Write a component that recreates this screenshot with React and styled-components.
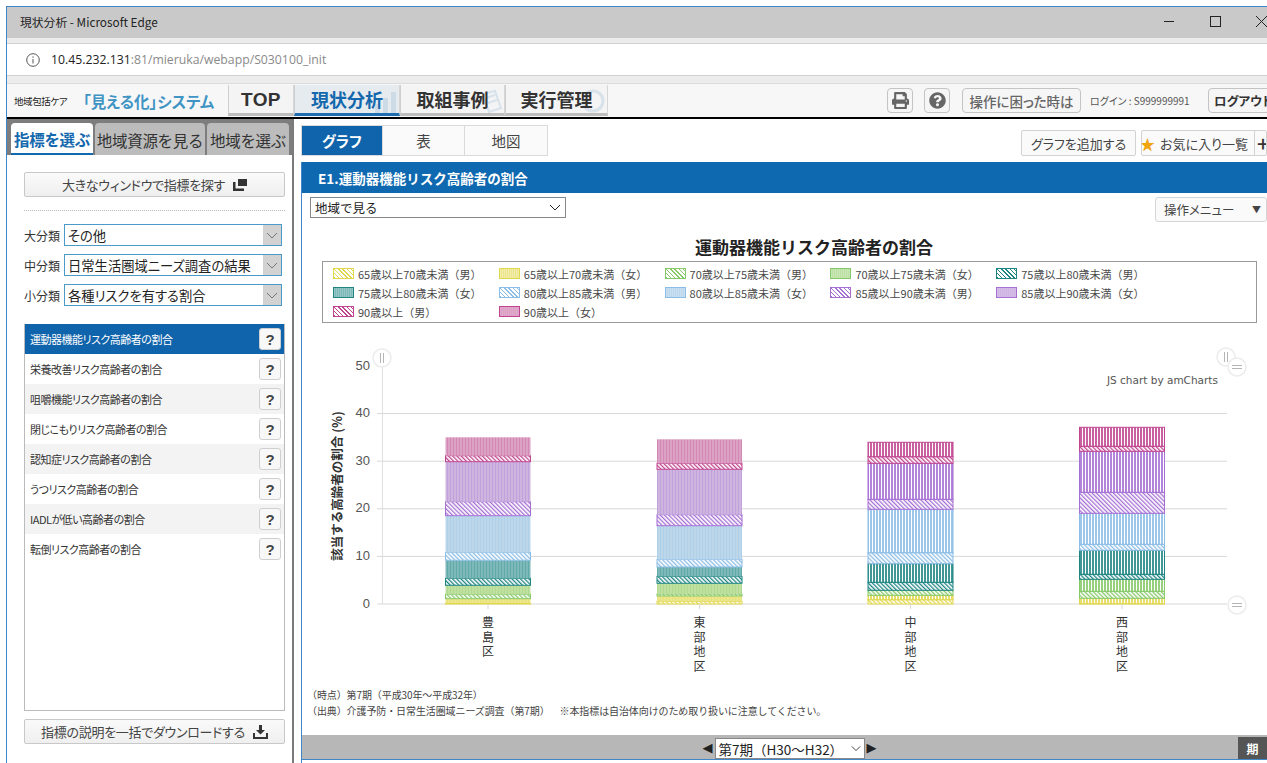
import React from 'react';
import styled, { createGlobalStyle } from 'styled-components';
import { FaPrint, FaQuestionCircle } from 'react-icons/fa';

const GlobalStyle = createGlobalStyle`
  html, body {
    margin: 0;
    padding: 0;
    background: #fff;
    overflow: hidden;
  }
  * { box-sizing: border-box; }
  body {
    font-family: "Noto Sans CJK JP", "Liberation Sans", sans-serif;
    color: #333;
  }
`;

const Page = styled.div`
  width: 1267px;
  height: 763px;
  padding: 6px 0 0 6px;
  overflow: hidden;
`;

const Browser = styled.div`
  width: 1261px;
  height: 757px;
  border-top: 1px solid #3f87c8;
  border-left: 1px solid #3f87c8;
  display: flex;
  flex-direction: column;
  overflow: hidden;
  background: #fff;
`;

const TitleBar = styled.div`
  height: 31px;
  flex: none;
  background: #c9c9c9;
  display: flex;
  align-items: center;
  padding: 0 0 3px 13px;
  font-size: 11.8px;
  color: #222;
`;

const TitleText = styled.span`
  flex: 1;
`;

const WinButton = styled.span`
  width: 46px;
  display: flex;
  justify-content: center;
  align-items: center;
  margin-right: ${p => p.$gap || 0}px;
`;

const AddressWrap = styled.div`
  height: 45px;
  flex: none;
  background: #ececec;
  padding: 5px 0 6px;
`;

const AddressBar = styled.div`
  height: 33px;
  background: #fff;
  border-top: 1px solid #d0d0d0;
  border-bottom: 1px solid #d0d0d0;
  display: flex;
  align-items: center;
  padding-left: 19px;
  gap: 11px;
  font-family: "Open Sans", "Noto Sans CJK JP", sans-serif;
  font-size: 12.25px;
  color: #222;
`;

const UrlRest = styled.span`
  color: #8a8a8a;
`;

const AppHeader = styled.header`
  height: 36px;
  flex: none;
  border-bottom: 2px solid #000;
  border-top: 1px solid #dcdcdc;
  background: #f7f7f7;
  display: flex;
  align-items: center;
  padding-left: 7px;
`;

const OrgName = styled.span`
  width: 69px;
  font-size: 9.5px;
  letter-spacing: -0.4px;
  font-feature-settings: "palt";
  color: #222;
`;

const LogoText = styled.span`
  width: 145px;
  font-size: 15.5px;
  font-weight: 700;
  white-space: nowrap;
  font-feature-settings: "palt";
  color: #3f94c4;
`;

const NavTabs = styled.nav`
  display: flex;
  height: 31px;
  align-self: flex-end;
  margin-bottom: 1px;
`;

const NavTab = styled.div`
  position: relative;
  width: ${p => p.$width}px;
  display: flex;
  align-items: center;
  justify-content: center;
  border-left: 1px solid #cfcfcf;
  border-right: 1px solid #d6d6d6;
  border-bottom: 3px solid ${p => (p.$active ? '#1e6db0' : '#bdbdbd')};
  background: ${p => (p.$active ? '#e6ebef' : '#f4f4f4')};
  color: ${p => (p.$active ? '#1468ad' : '#333')};
  font-weight: 700;
  line-height: 1;
  overflow: hidden;
`;

const NavLabel = styled.span`
  position: relative;
  letter-spacing: ${p => (p.$latin ? '0.4px' : '0')};
  font-family: ${p => (p.$latin ? '"Liberation Sans", sans-serif' : 'inherit')};
  font-size: ${p => (p.$latin ? '19px' : '18px')};
`;

const NavMark = styled.svg`
  position: absolute;
  right: 1px;
  top: 3px;
  width: 26px;
  height: 26px;
  opacity: 0.28;
`;

const HeaderTools = styled.div`
  margin-left: auto;
  display: flex;
  align-items: center;
  width: 381px;
  flex: none;
  transform: translateX(1px);
`;

const ToolButton = styled.div`
  height: 25px;
  width: ${p => p.$width}px;
  margin-right: ${p => p.$gap}px;
  flex: none;
  border: 1px solid #c4c4c4;
  border-radius: 4px;
  background: #f6f6f6;
  display: flex;
  align-items: center;
  justify-content: ${p => (p.$start ? 'flex-start' : 'center')};
  padding-left: ${p => (p.$start ? 5 : 0)}px;
  color: ${p => p.$color || '#666'};
  font-size: ${p => p.$size || 13.5}px;
  font-weight: ${p => p.$weight || 500};
  font-feature-settings: "palt";
  white-space: nowrap;
  overflow: hidden;
`;

const LoginId = styled.span`
  width: 118px;
  flex: none;
  font-size: 10px;
  font-feature-settings: "palt";
  color: #555;
  white-space: nowrap;
`;

const Content = styled.div`
  flex: 1;
  display: flex;
  min-height: 0;
`;

const SidePanel = styled.aside`
  width: 287px;
  flex: none;
  border-right: 2px solid #7a7a7a;
  display: flex;
  flex-direction: column;
`;

const SideTabs = styled.div`
  height: 36px;
  flex: none;
  background: #7d7d7d;
  display: flex;
  align-items: flex-end;
  gap: 2px;
  padding-left: 4px;
`;

const SideTab = styled.div`
  width: ${p => p.$width}px;
  height: 32px;
  flex: none;
  border-radius: 4px 4px 0 0;
  display: flex;
  align-items: center;
  justify-content: center;
  padding-top: 3px;
  font-size: 15.5px;
  line-height: 1;
  white-space: nowrap;
  letter-spacing: -0.3px;
  background: ${p => (p.$active ? '#fff' : '#bcbcbc')};
  color: ${p => (p.$active ? '#1468ad' : '#333')};
  font-weight: ${p => (p.$active ? 700 : 400)};
  border-bottom: ${p => (p.$active ? '2px solid #1468ad' : 'none')};
`;

const SideBody = styled.div`
  flex: 1;
  min-height: 0;
  padding: 17px 7px 0 17px;
  display: flex;
  flex-direction: column;
`;

const WideButton = styled.div`
  height: 25px;
  flex: none;
  border: 1px solid #c8c8c8;
  border-radius: 2px;
  background: linear-gradient(#fafafa, #efefef);
  display: flex;
  align-items: center;
  justify-content: center;
  gap: 8px;
  font-size: 13px;
  letter-spacing: -0.3px;
  font-feature-settings: "palt";
  color: #444;
`;

const DottedRule = styled.hr`
  width: 100%;
  margin: 13px 0 13px;
  border: 0;
  border-top: 1px dotted #bbb;
`;

const FilterRow = styled.div`
  display: flex;
  align-items: center;
  height: 22px;
  margin-bottom: 8px;
  padding-right: 3px;
`;

const FilterLabel = styled.span`
  width: 40px;
  flex: none;
  font-size: 12px;
  color: #333;
`;

const SelectBox = styled.div`
  flex: 1;
  height: 100%;
  border: 1px solid #4a9bca;
  display: flex;
  align-items: center;
  justify-content: space-between;
  padding-left: 3px;
  font-size: 13.3px;
  font-feature-settings: "palt";
  color: #222;
  white-space: nowrap;
`;

const SelectArrow = styled.span`
  width: 18px;
  height: 100%;
  background: #d2d2d2;
  display: flex;
  align-items: center;
  justify-content: center;
  color: #777;
  flex: none;
`;

const IndicatorList = styled.div`
  flex: none;
  height: 387px;
  margin-top: 10px;
  border: 1px solid #bbb;
  border-top: 0;
`;

const IndicatorRow = styled.div`
  height: 30px;
  display: flex;
  align-items: center;
  justify-content: space-between;
  padding: 0 3px 0 5px;
  font-size: 11px;
  letter-spacing: -0.5px;
  font-feature-settings: "palt";
  background: ${p => (p.$selected ? '#0f64ab' : p.$shaded ? '#f3f3f3' : '#fff')};
  color: ${p => (p.$selected ? '#fff' : '#333')};
`;

const HelpButton = styled.span`
  width: 22px;
  height: 22px;
  border: 1px solid #cfcfcf;
  border-radius: 3px;
  background: #f8f8f8;
  display: flex;
  align-items: center;
  justify-content: center;
  font-family: "Liberation Sans", sans-serif;
  font-weight: 700;
  font-size: 15px;
  letter-spacing: 0;
  color: #444;
`;

const DownloadButton = styled(WideButton)`
  margin-top: 8px;
`;

const Main = styled.main`
  flex: 1;
  min-width: 0;
  padding: 6px 0 0 7px;
  display: flex;
  flex-direction: column;
`;

const MainTop = styled.div`
  height: 31px;
  flex: none;
  display: flex;
  align-items: flex-end;
`;

const ViewTab = styled.div`
  width: ${p => p.$width}px;
  height: 31px;
  flex: none;
  display: flex;
  align-items: center;
  justify-content: center;
  border: 1px solid #dadada;
  border-left-width: ${p => (p.$active ? 1 : 0)}px;
  font-size: 14.5px;
  font-feature-settings: "palt";
  background: ${p => (p.$active ? '#0f64ab' : '#fafafa')};
  color: ${p => (p.$active ? '#fff' : '#444')};
  font-weight: ${p => (p.$active ? 700 : 400)};
`;

const TopActions = styled.div`
  margin-left: auto;
  display: flex;
  gap: 5px;
  width: 246px;
  flex: none;
`;

const ActionButton = styled.div`
  height: 26px;
  flex: none;
  width: ${p => p.$width}px;
  border: 1px solid #d2d2d2;
  border-radius: 2px;
  background: #fafafa;
  display: flex;
  align-items: center;
  justify-content: center;
  gap: 5px;
  font-size: 13px;
  font-feature-settings: "palt";
  color: #444;
  white-space: nowrap;
  overflow: hidden;
`;

const Star = styled.span`
  color: #f0a40e;
  font-size: 15px;
`;

const PlusCell = styled.span`
  width: 14px;
  margin-left: 1px;
  border-left: 1px solid #d2d2d2;
  height: 100%;
  display: flex;
  align-items: center;
  padding-left: 2px;
  font-size: 21px;
  font-weight: 500;
  color: #333;
`;

const ChartPanel = styled.section`
  flex: 1;
  min-height: 0;
  margin-top: 6px;
  display: flex;
  flex-direction: column;
  border-left: 1px solid #3f87c8;
`;

const PanelHeading = styled.h2`
  margin: 0;
  height: 31px;
  flex: none;
  background: #0f69b0;
  color: #fff;
  font-size: 13.5px;
  font-weight: 700;
  display: flex;
  align-items: center;
  padding-left: 16px;
`;

const ChartControls = styled.div`
  display: flex;
  justify-content: space-between;
  height: 26px;
  flex: none;
  padding: 4px 0 0 8px;
`;

const AreaSelect = styled.div`
  width: 256px;
  height: 21px;
  border: 1px solid #888;
  display: flex;
  align-items: center;
  justify-content: space-between;
  padding: 0 4px;
  font-size: 12.5px;
  color: #222;
`;

const MenuButton = styled.div`
  width: 112px;
  height: 25px;
  border: 1px solid #d5d5d5;
  border-radius: 3px;
  background: #fafafa;
  display: flex;
  align-items: center;
  justify-content: space-between;
  padding: 0 5px 0 8px;
  font-size: 12.5px;
  font-feature-settings: "palt";
  color: #444;
`;

const MenuCaret = styled.span`
  font-size: 9px;
`;

const ChartTitle = styled.h3`
  margin: 16px 0 0;
  height: 24px;
  flex: none;
  width: 1024px;
  text-align: center;
  font-size: 17px;
  line-height: 24px;
  font-weight: 700;
  color: #222;
`;

const Legend = styled.div`
  flex: none;
  width: 935px;
  height: 62px;
  margin: 2px 0 0 20px;
  border: 1px solid #999;
  padding: 2px 0 0 10px;
  display: grid;
  grid-template-columns: repeat(5, 165.8px);
  grid-auto-rows: 19px;
`;

const LegendItem = styled.div`
  display: flex;
  align-items: center;
  gap: 4px;
  font-size: 11px;
  color: #4a4a4a;
  white-space: nowrap;
`;

const Swatch = styled.span`
  width: 21px;
  height: 11px;
  flex: none;
  border: 1px solid ${p => p.$color};
  background: ${p =>
    p.$female
      ? `repeating-linear-gradient(90deg, ${p.$color}77 0 1px, ${p.$soft} 1px 2px)`
      : `repeating-linear-gradient(45deg, ${p.$color} 0 1px, #fff 1px 3px)`};
`;

const ChartSvg = styled.svg`
  display: block;
  flex: none;
  width: 965px;
  height: 350px;
  margin-top: 7px;
  font-family: "Noto Sans CJK JP", sans-serif;
`;

const Notes = styled.div`
  flex: none;
  padding: 7px 0 0 5px;
  font-size: 10px;
  line-height: 16px;
  letter-spacing: -0.1px;
  color: #444;
`;

const NoteGap = styled.span`
  margin-left: 10px;
`;

const PeriodBar = styled.div`
  margin-top: 16px;
  height: 25px;
  flex: none;
  background: #b7b7b7;
  border-bottom: 1px solid #3f87c8;
  display: flex;
  align-items: center;
  justify-content: center;
  gap: 2px;
  padding-left: 10px;
  position: relative;
`;

const PeriodArrow = styled.span`
  font-size: 13px;
  color: #222;
  font-family: "DejaVu Sans", sans-serif;
`;

const PeriodSelect = styled.div`
  width: 150px;
  height: 21px;
  margin-top: 3px;
  background: #fff;
  border: 1px solid #888;
  display: flex;
  align-items: center;
  justify-content: space-between;
  padding: 0 3px;
  font-size: 13.5px;
  color: #222;
  white-space: nowrap;
`;

const PeriodBadge = styled.span`
  position: absolute;
  right: 0;
  top: 2px;
  bottom: 0;
  width: 29px;
  background: #555;
  color: #fff;
  font-size: 12px;
  font-weight: 700;
  display: flex;
  align-items: center;
  justify-content: center;
`;

const Chevron = ({ width = 12 }) => (
  <svg width={width} height="7" viewBox="0 0 12 7" fill="none" stroke="currentColor" strokeWidth="1">
    <path d="M1 1l5 5 5-5" />
  </svg>
);

const WindowIcon = () => (
  <svg width="14" height="12" viewBox="0 0 14 12" fill="#333">
    <path d="M5 0h9v7H5zM0 3h2.5v6.5H11V12H0z" />
  </svg>
);

const DownloadIcon = () => (
  <svg width="15" height="14" viewBox="0 0 15 14" fill="#333">
    <path d="M6 0h3v5h3L7.5 9.5 3 5h3zM0 8h2v4h11V8h2v6H0z" />
  </svg>
);

const INDICATORS = [
  '運動器機能リスク高齢者の割合',
  '栄養改善リスク高齢者の割合',
  '咀嚼機能リスク高齢者の割合',
  '閉じこもりリスク高齢者の割合',
  '認知症リスク高齢者の割合',
  'うつリスク高齢者の割合',
  'IADLが低い高齢者の割合',
  '転倒リスク高齢者の割合',
];

// 色は年齢階級ごと。soft は縞を弱めたときの地色
const SERIES = {
  y: { line: '#e2d84e', soft: '#ece68c' },
  g: { line: '#86c968', soft: '#bfe0a0' },
  t: { line: '#1e8583', soft: '#7db9b9' },
  b: { line: '#8bbde6', soft: '#bcd7ea' },
  p: { line: '#a56fd4', soft: '#cdb5df' },
  r: { line: '#c04590', soft: '#dba2c3' },
};

const LEGEND = [
  ['65歳以上70歳未満\uFF08男\uFF09', 'y', false],
  ['65歳以上70歳未満\uFF08女\uFF09', 'y', true],
  ['70歳以上75歳未満\uFF08男\uFF09', 'g', false],
  ['70歳以上75歳未満\uFF08女\uFF09', 'g', true],
  ['75歳以上80歳未満\uFF08男\uFF09', 't', false],
  ['75歳以上80歳未満\uFF08女\uFF09', 't', true],
  ['80歳以上85歳未満\uFF08男\uFF09', 'b', false],
  ['80歳以上85歳未満\uFF08女\uFF09', 'b', true],
  ['85歳以上90歳未満\uFF08男\uFF09', 'p', false],
  ['85歳以上90歳未満\uFF08女\uFF09', 'p', true],
  ['90歳以上\uFF08男\uFF09', 'r', false],
  ['90歳以上\uFF08女\uFF09', 'r', true],
];

// 積み上げの下から順:y座標の区切り
const ORDER = ['yM', 'yF', 'gM', 'gF', 'tM', 'tF', 'bM', 'bF', 'pM', 'pF', 'rM', 'rF'];
const BARS = [
  { name: '豊島区', x: 445, soft: true, edges: [604, 603, 598.7, 594.3, 585.3, 578.3, 560.3, 552.3, 515.7, 501.7, 461.7, 455.7, 437.3] },
  { name: '東部地区', x: 656.5, soft: true, edges: [604, 601.3, 596, 594, 583.3, 576.3, 567, 559.3, 525.7, 514.7, 469.3, 463.3, 439.3] },
  { name: '中部地区', x: 867.5, soft: false, edges: [604, 599.7, 595.3, 590.3, 590.3, 582.3, 563.7, 552.7, 509.3, 499.3, 463.3, 456.7, 442.3] },
  { name: '西部地区', x: 1079, soft: false, edges: [604, 603.7, 598.3, 591.3, 579.3, 574.3, 550.3, 544.3, 513.3, 492.3, 451.3, 446.3, 427.3] },
];

const TICKS = [0, 10, 20, 30, 40, 50];
const tickY = v => 604 - v * 4.76;

const SeriesPatterns = () => (
  <defs>
    {Object.entries(SERIES).map(([key, c]) => (
      <React.Fragment key={key}>
        <pattern id={`${key}F`} width="3" height="3" patternUnits="userSpaceOnUse">
          <rect width="3" height="3" fill="#fff" opacity="0.9" />
          <rect width="2" height="3" fill={c.line} opacity="0.85" />
        </pattern>
        <pattern id={`${key}Fs`} width="3" height="3" patternUnits="userSpaceOnUse">
          <rect width="3" height="3" fill={c.soft} />
          <rect width="1" height="3" fill={c.line} opacity="0.28" />
        </pattern>
        <pattern id={`${key}M`} width="3" height="3" patternUnits="userSpaceOnUse" patternTransform="rotate(-45)">
          <rect width="3" height="3" fill="#fff" />
          <rect width="1.3" height="3" fill={c.line} />
        </pattern>
      </React.Fragment>
    ))}
  </defs>
);

const Handle = ({ x, y, vertical }) => (
  <g>
    <circle cx={x} cy={y} r="9" fill="#fff" stroke="#ececec" strokeWidth="1.5" />
    {vertical ? (
      <path d={`M${x - 1.5} ${y - 5}v10M${x + 1.5} ${y - 5}v10`} stroke="#b5b5b5" fill="none" />
    ) : (
      <path d={`M${x - 5} ${y - 1.5}h10M${x - 5} ${y + 1.5}h10`} stroke="#b5b5b5" fill="none" />
    )}
  </g>
);

const StackedChart = () => (
  <ChartSvg viewBox="302 330 965 350">
    <SeriesPatterns />
    <path d="M382.5 366V604" stroke="#e0e0e0" fill="none" />
    {TICKS.map(v => (
      <g key={v}>
        {v < 50 && <path d={`M377 ${tickY(v)}H1227`} stroke="#d8d8d8" fill="none" />}
        <text x="370" y={tickY(v) + 3.5} textAnchor="end" fontSize="13" fill="#555" fontFamily="Liberation Sans, sans-serif">
          {v}
        </text>
      </g>
    ))}
    <text
      transform="translate(342 486) rotate(-90)"
      textAnchor="middle"
      fontSize="12.5"
      fontWeight="700"
      fill="#333"
    >
      該当する高齢者の割合 (%)
    </text>
    {BARS.map(bar => (
      <g key={bar.name}>
        {ORDER.map((id, i) => {
          const height = bar.edges[i] - bar.edges[i + 1];
          if (height <= 0) return null;
          const female = id[1] === 'F';
          const color = SERIES[id[0]].line;
          return (
            <rect
              key={id}
              x={bar.x + 0.5}
              y={bar.edges[i + 1]}
              width="85"
              height={height}
              fill={`url(#${id}${female && bar.soft ? 's' : ''})`}
              stroke={female && bar.soft ? 'none' : color}
            />
          );
        })}
        <path d={`M${bar.x + 43} 604v5`} stroke="#d8d8d8" fill="none" />
        {[...bar.name].map((ch, i) => (
          <text key={i} x={bar.x + 43} y={627 + i * 14.6} textAnchor="middle" fontSize="12" fill="#333">
            {ch}
          </text>
        ))}
      </g>
    ))}
    <text x="1107" y="384" fontSize="10.5" fill="#555" fontFamily="DejaVu Sans, sans-serif">
      JS chart by amCharts
    </text>
    <Handle x={382} y={358} vertical />
    <Handle x={1226} y={357} vertical />
    <Handle x={1237} y={367} />
    <Handle x={1237} y={605} />
  </ChartSvg>
);

export default function App() {
  return (
    <>
      <GlobalStyle />
      <Page>
        <Browser>
          <TitleBar>
            <TitleText>現状分析 - Microsoft Edge</TitleText>
            <WinButton>
              <svg width="10" height="10"><path d="M0 5.5h10" stroke="#222" /></svg>
            </WinButton>
            <WinButton>
              <svg width="11" height="11"><rect x="0.5" y="0.5" width="10" height="10" fill="none" stroke="#222" /></svg>
            </WinButton>
            <WinButton $gap={-17}>
              <svg width="11" height="11"><path d="M0 0l11 11M11 0L0 11" stroke="#222" /></svg>
            </WinButton>
          </TitleBar>
          <AddressWrap>
            <AddressBar>
              <svg width="14" height="14" viewBox="0 0 14 14" fill="none" stroke="#555">
                <circle cx="7" cy="7" r="6.3" />
                <path d="M7 6v4.5M7 3.4v1.4" />
              </svg>
              <span>
                10.45.232.131<UrlRest>:81/mieruka/webapp/S030100_init</UrlRest>
              </span>
            </AddressBar>
          </AddressWrap>
          <AppHeader>
            <OrgName>地域包括ケア</OrgName>
            <LogoText>「見える化」システム</LogoText>
            <NavTabs>
              <NavTab $width={66}>
                <NavLabel $latin>TOP</NavLabel>
              </NavTab>
              <NavTab $width={106} $active>
                <NavMark viewBox="0 0 26 26" fill="#8fb4d4">
                  <path d="M3 16h5v10H3zM11 10h5v16h-5zM19 4h5v22h-5z" />
                </NavMark>
                <NavLabel>現状分析</NavLabel>
              </NavTab>
              <NavTab $width={105}>
                <NavMark viewBox="0 0 26 26" fill="none" stroke="#8fb4d4" strokeWidth="2">
                  <path d="M6 6l12-3 6 17-12 4zM9 10l9-3M11 15l9-3" />
                </NavMark>
                <NavLabel>取組事例</NavLabel>
              </NavTab>
              <NavTab $width={103}>
                <NavMark viewBox="0 0 26 26" fill="none" stroke="#8fb4d4" strokeWidth="3">
                  <circle cx="13" cy="13" r="10" />
                </NavMark>
                <NavLabel>実行管理</NavLabel>
              </NavTab>
            </NavTabs>
            <HeaderTools>
              <ToolButton $width={26} $gap={11} $size={17}>
                <FaPrint />
              </ToolButton>
              <ToolButton $width={26} $gap={12} $size={17}>
                <FaQuestionCircle />
              </ToolButton>
              <ToolButton $width={119} $gap={9}>操作に困った時は</ToolButton>
              <LoginId>ログイン : S999999991</LoginId>
              <ToolButton $width={66} $gap={0} $color="#333" $size={12.5} $weight={700} $start>
                ログアウト
              </ToolButton>
            </HeaderTools>
          </AppHeader>
          <Content>
            <SidePanel>
              <SideTabs>
                <SideTab $width={82} $active>指標を選ぶ</SideTab>
                <SideTab $width={110}>地域資源を見る</SideTab>
                <SideTab $width={82}>地域を選ぶ</SideTab>
              </SideTabs>
              <SideBody>
                <WideButton>
                  大きなウィンドウで指標を探す
                  <WindowIcon />
                </WideButton>
                <DottedRule />
                <FilterRow>
                  <FilterLabel>大分類</FilterLabel>
                  <SelectBox>
                    その他
                    <SelectArrow><Chevron /></SelectArrow>
                  </SelectBox>
                </FilterRow>
                <FilterRow>
                  <FilterLabel>中分類</FilterLabel>
                  <SelectBox>
                    日常生活圏域ニーズ調査の結果
                    <SelectArrow><Chevron /></SelectArrow>
                  </SelectBox>
                </FilterRow>
                <FilterRow>
                  <FilterLabel>小分類</FilterLabel>
                  <SelectBox>
                    各種リスクを有する割合
                    <SelectArrow><Chevron /></SelectArrow>
                  </SelectBox>
                </FilterRow>
                <IndicatorList>
                  {INDICATORS.map((label, i) => (
                    <IndicatorRow key={label} $selected={i === 0} $shaded={i > 0 && i % 2 === 0}>
                      {label}
                      <HelpButton>?</HelpButton>
                    </IndicatorRow>
                  ))}
                </IndicatorList>
                <DownloadButton>
                  指標の説明を一括でダウンロードする
                  <DownloadIcon />
                </DownloadButton>
              </SideBody>
            </SidePanel>
            <Main>
              <MainTop>
                <ViewTab $width={82} $active>グラフ</ViewTab>
                <ViewTab $width={82}>表</ViewTab>
                <ViewTab $width={83}>地図</ViewTab>
                <TopActions>
                  <ActionButton $width={115}>グラフを追加する</ActionButton>
                  <ActionButton $width={126}>
                    <Star>★</Star>
                    お気に入り一覧
                    <PlusCell>+</PlusCell>
                  </ActionButton>
                </TopActions>
              </MainTop>
              <ChartPanel>
                <PanelHeading>E1.運動器機能リスク高齢者の割合</PanelHeading>
                <ChartControls>
                  <AreaSelect>
                    地域で見る
                    <Chevron />
                  </AreaSelect>
                  <MenuButton>
                    操作メニュー
                    <MenuCaret>▼</MenuCaret>
                  </MenuButton>
                </ChartControls>
                <ChartTitle>運動器機能リスク高齢者の割合</ChartTitle>
                <Legend>
                  {LEGEND.map(([label, key, female]) => (
                    <LegendItem key={label}>
                      <Swatch $color={SERIES[key].line} $soft={SERIES[key].soft} $female={female} />
                      {label}
                    </LegendItem>
                  ))}
                </Legend>
                <StackedChart />
                <Notes>
                  <div>{'\uFF08時点\uFF09第7期\uFF08平成30年\uFF5E平成32年\uFF09'}</div>
                  <div>
                    {'\uFF08出典\uFF09介護予防・日常生活圏域ニーズ調査\uFF08第7期\uFF09'}
                    <NoteGap>※本指標は自治体向けのため取り扱いに注意してください。</NoteGap>
                  </div>
                </Notes>
                <PeriodBar>
                  <PeriodArrow>◀</PeriodArrow>
                  <PeriodSelect>
                    {'第7期\uFF08H30\uFF5EH32\uFF09'}
                    <Chevron width={10} />
                  </PeriodSelect>
                  <PeriodArrow>▶</PeriodArrow>
                  <PeriodBadge>期</PeriodBadge>
                </PeriodBar>
              </ChartPanel>
            </Main>
          </Content>
        </Browser>
      </Page>
    </>
  );
}
